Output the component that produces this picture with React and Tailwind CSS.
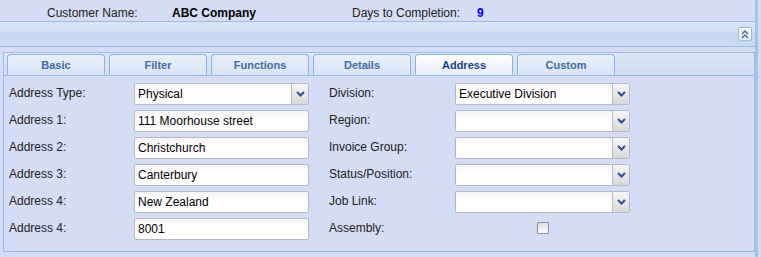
import React from "react";

function Chevron() {
  return (
    <svg width="9" height="6" viewBox="0 0 9 6">
      <path d="M1 1 L4.5 4.5 L8 1" fill="none" stroke="#2f4f8f" strokeWidth="2" />
    </svg>
  );
}

function Select({ value }) {
  return (
    <div className="w-[175px] h-[22px] flex border border-[#b5b8c8] rounded-[2px] overflow-hidden bg-white">
      <div className="flex-1 flex items-center pl-[3px] text-[12px] text-black bg-[linear-gradient(#f4f4f4_0%,#ffffff_35%)]">
        {value}
      </div>
      <div className="w-[17px] flex items-center justify-center border-l border-[#b5b8c8] bg-[linear-gradient(#f6f6f6,#d8d8d8)]">
        <Chevron />
      </div>
    </div>
  );
}

function Input({ value }) {
  return (
    <div className="w-[175px] h-[22px] flex items-center pl-[3px] border border-[#b5b8c8] rounded-[2px] text-[12px] text-black bg-[linear-gradient(#f4f4f4_0%,#ffffff_35%)]">
      {value}
    </div>
  );
}

function Label({ children }) {
  return (
    <div className="h-[22px] flex items-center pb-[2px] text-[12px] text-[#222]">{children}</div>
  );
}

export default function App() {
  const tabs = ["Basic", "Filter", "Functions", "Details", "Address", "Custom"];
  const left = [
    ["Address Type:", "select", "Physical"],
    ["Address 1:", "input", "111 Moorhouse street"],
    ["Address 2:", "input", "Christchurch"],
    ["Address 3:", "input", "Canterbury"],
    ["Address 4:", "input", "New Zealand"],
    ["Address 4:", "input", "8001"],
  ];
  const right = [
    ["Division:", "select", "Executive Division"],
    ["Region:", "select", ""],
    ["Invoice Group:", "select", ""],
    ["Status/Position:", "select", ""],
    ["Job Link:", "select", ""],
    ["Assembly:", "check", ""],
  ];
  return (
    <div className="w-[761px] h-[257px] bg-[#d5dcf5] flex overflow-hidden font-['Liberation_Sans',Arial,sans-serif]">
      <div className="w-[755px] flex flex-col">
        <div className="h-[21px] flex pt-[6px] pl-[47px] text-[12px] leading-[14px] text-[#222]">
          <div className="w-[125px]">Customer Name:</div>
          <div className="w-[180px] font-bold text-black">ABC Company</div>
          <div className="w-[125px]">Days to Completion:</div>
          <div className="font-bold text-[#0000ee]">9</div>
        </div>
        <div className="h-[26px] border-y border-[#99bbe8] bg-[linear-gradient(#dbe5f6_0%,#d3dff4_42%,#c5d6ef_46%,#c9daf1_100%)] flex items-center justify-end pr-[3px]">
          <div className="w-[14px] h-[14px] rounded-[2px] border border-[#99bbe8] bg-[linear-gradient(#ffffff,#e3ecf8)] flex items-center justify-center">
            <svg width="8" height="9" viewBox="0 0 8 9">
              <path d="M1 4 L4 1 L7 4 M1 8 L4 5 L7 8" fill="none" stroke="#3d6aa8" strokeWidth="1.5" />
            </svg>
          </div>
        </div>
        <div className="mt-[5px] ml-[3px] h-[200px] border border-[#99bbe8] flex flex-col">
          <div className="h-[23px] pt-[1px] pl-[3px] flex gap-[4px] border-b border-[#99bbe8] bg-[linear-gradient(#dce7f6,#cddcf2)]">
            {tabs.map((t) => {
              const active = t === "Address";
              return (
                <div
                  key={t}
                  className={
                    active
                      ? "w-[98px] h-[21px] flex items-center justify-center border border-b-0 border-[#8db2e3] rounded-t-[4px] bg-[linear-gradient(#ffffff,#e6eefb)] text-[11px] font-bold text-[#15428b]"
                      : "w-[98px] h-[21px] flex items-center justify-center border border-b-0 border-[#8db2e3] rounded-t-[4px] bg-[linear-gradient(#e8eff9,#d7e4f6)] text-[11px] font-bold text-[#416da3]"
                  }
                >
                  {t}
                </div>
              );
            })}
          </div>
          <div className="pt-[7px] pl-[5px] flex">
            <div className="grid grid-cols-[125px_175px] gap-y-[5px]">
              {left.map(([l, type, v], i) => (
                <React.Fragment key={i}>
                  <Label>{l}</Label>
                  {type === "select" ? <Select value={v} /> : <Input value={v} />}
                </React.Fragment>
              ))}
            </div>
            <div className="ml-[20px] grid grid-cols-[126px_175px] gap-y-[5px]">
              {right.map(([l, type, v], i) => (
                <React.Fragment key={i}>
                  <Label>{l}</Label>
                  {type === "check" ? (
                    <div className="h-[22px] flex items-center justify-center pb-[2px]">
                      <div className="w-[12px] h-[12px] border border-[#8a8f99] rounded-[1px] bg-[linear-gradient(#dcdcdc,#ffffff)]" />
                    </div>
                  ) : (
                    <Select value={v} />
                  )}
                </React.Fragment>
              ))}
            </div>
          </div>
        </div>
      </div>
      <div className="w-[3px] bg-[#a9c1ea]" />
    </div>
  );
}
